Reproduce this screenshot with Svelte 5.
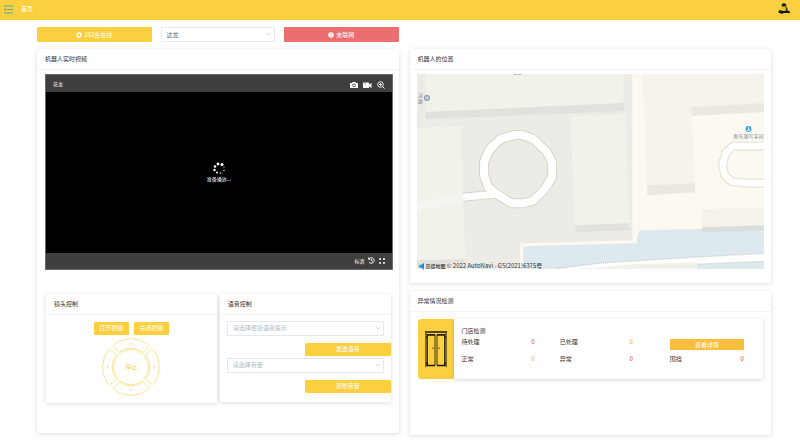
<script lang="ts">
	let robot = $state('达龙');
	let voice = $state('');
	let volume = $state('');

	const directions = [
		{ label: '上', angle: 0 },
		{ label: '右', angle: 90 },
		{ label: '下', angle: 180 },
		{ label: '左', angle: 270 },
	];

	// loading dots, fading clockwise
	const dots = [
		{ x: 6, y: 2, r: 1.4 },
		{ x: 10, y: 2.5, r: 1.5 },
		{ x: 12, y: 5, r: 0.6 },
		{ x: 12, y: 8.5, r: 0.7 },
		{ x: 8.5, y: 11, r: 0.8 },
		{ x: 5, y: 10.5, r: 1 },
		{ x: 2.5, y: 8, r: 1.2 },
		{ x: 3, y: 4.5, r: 1.3 },
	];
</script>

{#snippet chevron()}
	<svg class="chevron" viewBox="0 0 6 6" aria-hidden="true"><path d="M1 2l2 2 2-2" /></svg>
{/snippet}

<header class="topbar">
	<button class="icon-btn" aria-label="菜单">
		<svg width="9" height="9" viewBox="0 0 9 9">
			<path d="M0 1h9M3 4.500h6M0 8h9" stroke="#55a9a6" stroke-width="1.200" />
			<path d="M0 4.500l2-1.500v3z" fill="#55a9a6" />
		</svg>
	</button>
	<a href="#home">首页</a>
	<svg class="robot" width="12" height="12" viewBox="0 0 12 12" aria-hidden="true">
		<path d="M3.500 1.500l2-1.500 2.500 1 .5 2-1.500 1H4z" fill="#24251c" />
		<path d="M3 3.500h5l1 4-6 .5-1.500-1z" fill="#dfc91d" />
		<path d="M7.500 3l2 2v3H8z" fill="#3c3b1d" />
		<path d="M1 7l4 1 5-.5 2 1.200V10H5.500L4 11 2 10H.5z" fill="#111a24" />
	</svg>
</header>

<main>
	<div class="status-row">
		<button class="btn tall">
			<svg width="6" height="6" viewBox="0 0 6 6"><circle cx="3" cy="3" r="2" fill="none" stroke="#fff" stroke-width="1.400" /></svg>
			102台在线
		</button>
		<label class="select">
			<select bind:value={robot} aria-label="机器人">
				<option>达龙</option>
				<option>花龙</option>
			</select>
			{@render chevron()}
		</label>
		<button class="btn tall danger">
			<svg width="6" height="6" viewBox="0 0 6 6"><circle cx="3" cy="3" r="2.800" fill="#fff" /><path d="M3 1.300v2M3 4v.8" stroke="#ec6e6e" stroke-width=".8" /></svg>
			未联网
		</button>
	</div>

	<section class="panel live">
		<h2>机器人实时视频</h2>
		<div class="live-body">
			<div class="player">
				<div class="player-bar">
					<span>花龙</span>
					<div class="tools">
						<button class="icon-btn" aria-label="截图">
							<svg width="8" height="8" viewBox="0 0 8 8"><path fill="#fff" d="M0 2h2l.7-1h2.600L6 2h2v5H0z" /><circle cx="4" cy="4.300" r="1.400" fill="#fff" stroke="#3f3f3f" stroke-width=".8" /></svg>
						</button>
						<button class="icon-btn" aria-label="录像">
							<svg width="9" height="8" viewBox="0 0 9 8"><path fill="#fff" d="M0 2q0-.5.500-.5H5.500q.5 0 .5.500v1.500L8.500 2v5L6 5.500V7H0z" /><path d="M1.500 3H3" stroke="#3f3f3f" stroke-width=".6" /></svg>
						</button>
						<button class="icon-btn" aria-label="放大">
							<svg width="8" height="8" viewBox="0 0 8 8" fill="none" stroke="#fff" stroke-width=".9"><circle cx="3.500" cy="3.500" r="2.800" /><path d="M5.500 5.500l2 2M2 3.500h3M3.500 2v3" /></svg>
						</button>
					</div>
				</div>
				<div class="screen">
					<svg width="14" height="13" viewBox="0 0 14 13" aria-hidden="true">
						{#each dots as dot}
							<circle cx={dot.x} cy={dot.y} r={dot.r} fill="#fff" />
						{/each}
					</svg>
					<span>准备播放...</span>
				</div>
				<div class="player-bar bottom">
					<button class="icon-btn">标清</button>
					<button class="icon-btn" aria-label="回放">
						<svg width="7" height="7" viewBox="0 0 7 7" fill="none" stroke="#fff" stroke-width=".9"><path d="M1 2A2.800 2.800 0 1 1 1 5M.5.500V2.300h1.800M3.500 2v1.700L5 4.500" /></svg>
					</button>
					<button class="icon-btn" aria-label="全屏">
						<svg width="8" height="6" viewBox="0 0 8 6" fill="none" stroke="#fff" stroke-width=".8"><path d="M1.500 2V.5H3M5 .5h1.500V2M6.500 4v1.500H5M3 5.500H1.500V4M2 1l1 1M6 1L5 2M6 5L5 4M2 5l1-1" /></svg>
					</button>
				</div>
			</div>

			<div class="controls">
				<section class="card">
					<h2>镜头控制</h2>
					<div class="camera">
						<div class="camera-btns">
							<button class="btn">打开视频</button>
							<button class="btn">关闭视频</button>
						</div>
						<div class="pad">
							{#each directions as dir}
								<button class="arc" aria-label={dir.label}>
									<svg viewBox="0 0 58 58">
										<g transform="rotate({dir.angle} 29 29)">
											<path class="segment" d="M13 5.500A28.500 28.500 0 0 1 45 5.500Q47 7 46 9L41 14.500A18.500 18.500 0 0 0 17 14.500L12 9Q11 7 13 5.500Z" />
											<path d="M27 7l2-2 2 2" />
										</g>
									</svg>
								</button>
							{/each}
							<button class="stop">停止</button>
						</div>
					</div>
				</section>

				<section class="card">
					<h2>语音控制</h2>
					<div class="voice">
						<label class="select">
							<select class="empty" bind:value={voice} aria-label="语音提示">
								<option value="">请选择便捷语音提示</option>
							</select>
							{@render chevron()}
						</label>
						<button class="btn">发送语音</button>
						<label class="select">
							<select class="empty" bind:value={volume} aria-label="音量">
								<option value="">请选择音量</option>
							</select>
							{@render chevron()}
						</label>
						<button class="btn">调整音量</button>
					</div>
				</section>
			</div>
		</div>
	</section>

	<div class="side">
		<section class="panel">
			<h2>机器人的位置</h2>
			<div class="map">
				<svg viewBox="0 0 347 195" preserveAspectRatio="xMidYMid slice">
					<rect width="347" height="195" fill="#ecebe6" />
					<path fill="#fcf9f1" d="M215 0H347V195H103V169L215 166Z" />

					<!-- buildings -->
					<g fill="#f3f2ea">
						<path d="M8 0H206V29L9 38Z" />
						<path d="M0 54L44 52 48 185 0 186Z" />
						<path d="M153 43L208 40 212 149 158 151Z" />
					</g>
					<g fill="#e2e1dc">
						<path d="M9 38L207 29V37L9 45Z" />
						<path d="M158 151L212 149 213 156 158 158Z" />
						<path d="M0 186L48 185V188L0 190Z" />
					</g>
					<g fill="#f5f3ec">
						<path d="M225 0H347V29L274 33 277 109 230 111Z" />
						<path d="M284 135L347 133V152L285 153Z" />
					</g>
					<g fill="#eae8e1">
						<path d="M274 33L347 29V38L274 42Z" />
						<path d="M230 111L277 109 278 118 230 121Z" />
					</g>

					<!-- river and the road beside it -->
					<path fill="#dde8ef" d="M106 195V175Q106 172 110 172L219 169 221 159Q222 156 225 156L347 153V195Z" />
					<path fill="#d9dedc" d="M285 153L347 151V156L285 158Z" />
					<path fill="#fff" d="M138 195L183 189 243 185 347 179V187L280 190 200 195Z" />
					<path fill="#f3f2ea" d="M160 195L215 190 280 188V195Z" />
					<path class="dotted" d="M138 194L183 189 243 185 347 179M280 190L347 187" />

					<!-- roundabout -->
					<g fill="none" stroke-linejoin="round">
						<path d="M0 133L46 123" stroke="#f6f5f1" stroke-width="8" />
						<path d="M46 123L75 120" stroke="#d9d4c8" stroke-width="9" />
						<path d="M97 61L105 61 116 65 129 77 135 88 135 103 126 117 115 127 106 129 94 129 80 120 71 113 67 101 67 88 72 76 83 65Z" stroke="#d9d4c8" stroke-width="10" />
						<path d="M97 61L105 61 116 65 129 77 135 88 135 103 126 117 115 127 106 129 94 129 80 120 71 113 67 101 67 88 72 76 83 65Z" stroke="#fff" stroke-width="8" />
						<path d="M46 123L77 120" stroke="#fff" stroke-width="7" />
					</g>

					<!-- running track -->
					<path fill="#fff" d="M347 68H315L305 76 301 91 304 103 312 111 330 113H347V105H330L316 104 311 99 309 92 311 82 317 76H347Z" />
					<path class="dotted" d="M347 68H315L305 76 301 91 304 103 312 111 330 113H347M347 105H330L316 104 311 99 309 92 311 82 317 76H347" />

					<circle cx="10" cy="24" r="2.500" fill="#c5cbd8" stroke="#8793ae" />
					<circle cx="331" cy="55" r="3" fill="#38a5ec" />
					<path d="M331 53v3.500M329.500 56.500h3M331 54.500l1.500 1" stroke="#fff" stroke-width=".7" fill="none" />
					<path d="M97 .5h3M101 .5h3" stroke="#b5b5b3" />
					<g class="place">
						<text x="1" y="23">法</text>
						<text x="1" y="29">庭</text>
						<text x="331" y="64" text-anchor="middle">新东源写字间</text>
					</g>
				</svg>
				<div class="credit">
					<svg width="7" height="7" viewBox="0 0 7 7" aria-hidden="true">
						<path d="M0 0l3 2-2 2z" fill="#9be25a" />
						<path d="M0 4L6 0 6 7 4 5z" fill="#1787f5" />
					</svg>
					<b>高德地图</b>
					<span>© 2022 AutoNavi - GS(2021)6375号</span>
				</div>
			</div>
		</section>

		<section class="panel">
			<h2>异常情况检测</h2>
			<div class="store">
				<div class="door">
					<svg width="22" height="36" viewBox="0 0 22 36" aria-hidden="true">
						<path d="M0 1h22" stroke="#1c1805" stroke-width="1.500" />
						<path d="M1 1v35M21 1v35" stroke="#5c4d14" stroke-width="1.600" />
						<path d="M2.500 3.500h7.500v31H2.500zM12 3.500h7.500v31H12z" fill="none" stroke="#3d340f" />
						<path d="M2 34.500h8M12 34.500h8M2 4h8M12 4h8M2 5v2M20 5v2M2 31v3M20 31v3" stroke="#1c1805" stroke-width="1.500" />
						<path d="M8 16.500v1.500M14 16.500v1.500" stroke="#1c1805" stroke-width=".8" />
					</svg>
				</div>
				<div class="store-info">
					<h3>门店检测</h3>
					<div class="stats">
						<div>待处理 <span class="count red">0</span></div>
						<div>已处理 <span class="count">0</span></div>
						<button class="btn detail">查看详情</button>
						<div>正常 <span class="count">0</span></div>
						<div>异常 <span class="count red">0</span></div>
						<div>围挡 <span class="count red">0</span></div>
					</div>
				</div>
			</div>
		</section>
	</div>
</main>

<style>
	:global(body) {
		background: #fff;
		color: #303133;
		font: 6px/8px "Noto Sans CJK SC", "Noto Sans", sans-serif;
	}

	button,
	select {
		font: inherit;
		color: inherit;
		box-sizing: border-box;
		margin: 0;
		padding: 0;
		border: 0;
		cursor: pointer;
	}

	svg {
		display: block;
		flex: none;
	}

	h2,
	h3 {
		margin: 0;
		font: inherit;
	}

	.icon-btn {
		background: none;
	}

	.topbar {
		display: flex;
		align-items: center;
		gap: 8px;
		height: 20px;
		box-sizing: border-box;
		padding: 0 10px 2px 4px;
		background: #facf40;
	}

	.topbar a {
		color: #fff;
		text-decoration: none;
	}

	.robot {
		margin-left: auto;
	}

	main {
		display: grid;
		grid-template-columns: 1fr 1fr;
		align-items: start;
		gap: 7px 11px;
		padding: 7px 29px 11px 37px;
	}

	.status-row {
		grid-column: 1;
		display: grid;
		grid-template-columns: repeat(3, 1fr);
		gap: 9px;
	}

	.btn {
		display: flex;
		align-items: center;
		justify-content: center;
		gap: 2px;
		height: 13px;
		border-radius: 1px;
		background: #facf40;
		color: #fff;
	}

	.btn.tall {
		height: 15px;
	}

	.btn.danger {
		background: #ec6e6e;
	}

	.select {
		position: relative;
		display: block;
	}

	.select select {
		display: block;
		width: 100%;
		height: 15px;
		padding: 0 14px 0 5px;
		border: 1px solid #e6e8ed;
		border-radius: 1px;
		background: #fff;
		color: #606266;
		appearance: none;
	}

	.select select.empty {
		color: #b4b8c0;
	}

	.chevron {
		position: absolute;
		top: 4px;
		right: 3px;
		width: 6px;
		height: 6px;
		fill: none;
		stroke: #c0c4cc;
		stroke-width: 0.7;
		pointer-events: none;
	}

	.panel,
	.card {
		border-radius: 2px;
		background: #fff;
		box-shadow: 0 1px 5px rgba(0, 0, 0, 0.14);
	}

	.panel {
		grid-row: 2;
	}

	.panel h2 {
		padding: 6px 8px;
		border-bottom: 1px solid #f3f4f6;
	}

	.live-body {
		padding: 4px 6px 30px 8px;
	}

	.player {
		display: flex;
		flex-direction: column;
		box-sizing: border-box;
		aspect-ratio: 348 / 196;
		border: 1px solid #6c6c6c;
		background: #000;
		color: #fff;
		font-size: 5px;
	}

	.player-bar {
		display: flex;
		align-items: center;
		justify-content: space-between;
		height: 17px;
		padding: 0 7px;
		background: #3f3f3f;
	}

	.player-bar.bottom {
		justify-content: flex-end;
		gap: 3px;
		height: 16px;
		padding: 0 6px;
	}

	.tools {
		display: flex;
		gap: 5px;
		padding-top: 3px;
	}

	.screen {
		flex: 1;
		display: flex;
		flex-direction: column;
		align-items: center;
		justify-content: center;
	}

	.controls {
		display: grid;
		grid-template-columns: 1fr 1fr;
		align-items: start;
		gap: 3px;
		margin: 24px 2px 0 1px;
	}

	.camera {
		display: flex;
		flex-direction: column;
		align-items: center;
		gap: 3px;
		padding: 7px 0;
	}

	.camera-btns {
		display: flex;
		gap: 5px;
	}

	.camera-btns .btn {
		width: 35px;
	}

	.pad {
		display: grid;
		grid-template: 58px / 58px;
		place-items: center;
		color: #facf40;
	}

	.pad button {
		grid-area: 1 / 1;
		background: none;
	}

	.arc {
		width: 58px;
		height: 58px;
		pointer-events: none;
	}

	.arc path {
		fill: none;
		stroke: #fbdc78;
		stroke-width: 0.8;
	}

	.arc .segment {
		pointer-events: all;
	}

	.stop {
		width: 36px;
		height: 36px;
	}

	.pad .stop {
		border: 1px solid #fce7a0;
		border-radius: 50%;
	}

	.voice {
		display: grid;
		padding: 6px 0 9px;
	}

	.voice .select {
		margin: 0 7px;
	}

	.voice .btn {
		justify-self: end;
		width: 50%;
		margin: 7px 0 2px;
	}

	.voice .btn:last-child {
		margin-bottom: 0;
	}

	.side {
		grid-row: 2;
		grid-column: 2;
		display: grid;
		gap: 8px;
	}

	.side .panel {
		grid-row: auto;
	}

	.map {
		position: relative;
		margin: 4px 7px 0;
		padding-bottom: 14px;
	}

	.map > svg {
		width: 100%;
		aspect-ratio: 347 / 195;
	}

	.dotted {
		fill: none;
		stroke: #d3cdc0;
		stroke-width: 1.3;
		stroke-dasharray: 1 1;
	}

	.place {
		fill: #7b7f8a;
		font-size: 5px;
	}

	.credit {
		position: absolute;
		left: 1px;
		bottom: 13px;
		display: flex;
		align-items: center;
		gap: 1px;
	}

	.credit b {
		font-size: 5px;
		font-weight: 500;
	}

	.store {
		display: grid;
		grid-template-columns: 36px 1fr;
		min-height: 60px;
		margin: 7px 8px 0;
		padding-bottom: 56px;
	}

	.door {
		display: grid;
		place-items: center;
		border-radius: 3px 0 0 3px;
		background: #facf40;
	}

	.store-info {
		padding: 8px 19px 13px 8px;
		box-shadow: 0 1px 4px rgba(0, 0, 0, 0.16);
	}

	.stats {
		display: grid;
		grid-template-columns: 98fr 110fr 74fr;
		row-gap: 5px;
		margin-top: 1px;
	}

	.stats div {
		display: flex;
		justify-content: space-between;
		padding: 2px 25px 2px 0;
	}

	.stats div:nth-child(3n + 2) {
		padding-right: 37px;
	}

	.stats div:nth-child(3n) {
		padding-right: 0;
	}

	.count {
		color: #f3c131;
		font-weight: 500;
	}

	.count.red {
		color: #ef5a5a;
	}

	.stats .detail {
		height: 11px;
		margin: 3px 0 -2px;
		background: #f8bf3e;
	}
</style>
